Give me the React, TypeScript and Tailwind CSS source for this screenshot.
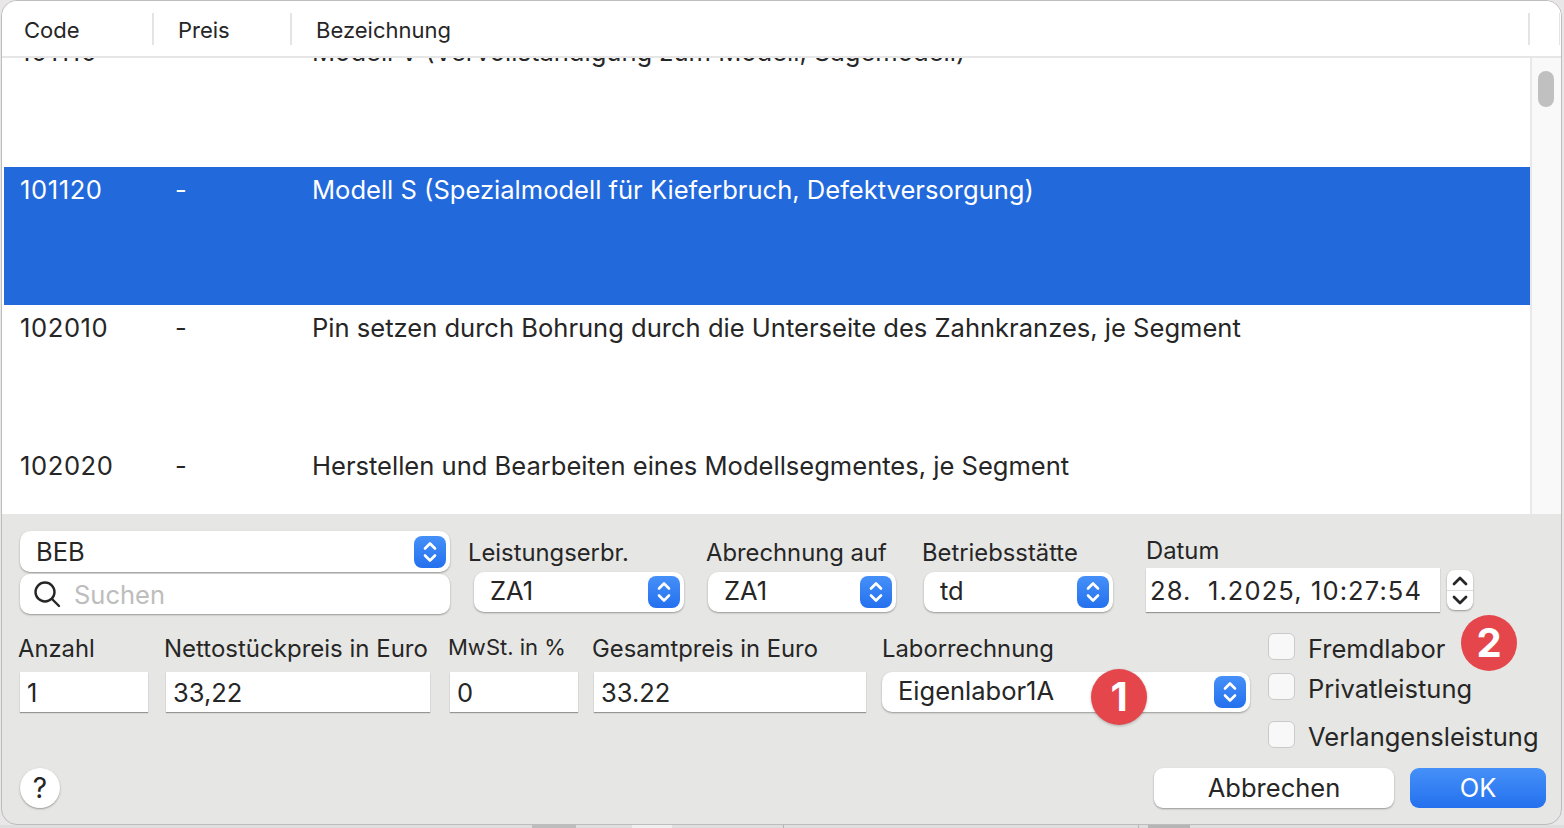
const rows = [
  { code: "101110", price: "-", name: "Modell V (Vervollständigung zum Modell, Sägemodell)" },
  { code: "101120", price: "-", name: "Modell S (Spezialmodell für Kieferbruch, Defektversorgung)", selected: true },
  { code: "102010", price: "-", name: "Pin setzen durch Bohrung durch die Unterseite des Zahnkranzes, je Segment" },
  { code: "102020", price: "-", name: "Herstellen und Bearbeiten eines Modellsegmentes, je Segment" },
];

const Arrows = () => (
  <span className="flex h-8 w-8 items-center justify-center rounded-lg bg-gradient-to-b from-[#4590f8] to-[#2470ee]">
    <svg width="16" height="24" viewBox="0 0 16 24" fill="none" stroke="white" strokeWidth="2.6" strokeLinecap="round" strokeLinejoin="round">
      <path d="M3 8.5 8 3.5l5 5" />
      <path d="M3 15.5l5 5 5-5" />
    </svg>
  </span>
);

const Select = ({ value, className, textClass = "-mt-[2px]" }: { value: string; className: string; textClass?: string }) => (
  <div className={`flex h-10 items-center justify-between rounded-[10px] bg-white pl-[16px] pr-1 text-[25.5px] leading-none text-[#262626] shadow-[0_1px_2px_rgba(0,0,0,0.35)] ${className}`}>
    <span className={textClass}>{value}</span>
    <Arrows />
  </div>
);

const Field = ({ value, className }: { value: string; className: string }) => (
  <div className={`flex h-10 items-center bg-white pl-[7px] pt-[2px] text-[25.5px] leading-none text-[#262626] shadow-[0_1px_1px_rgba(0,0,0,0.35)] ${className}`}>{value}</div>
);

const Check = ({ label, className }: { label: string; className: string }) => (
  <div className={`flex h-[27px] items-center gap-[13px] ${className}`}>
    <span className="h-[27px] w-[27px] rounded-[6px] border border-[#cacaca] bg-[#f8f8f8]" />
    <span className="pt-[5px] text-[25.5px] leading-none text-[#262626]">{label}</span>
  </div>
);

const Badge = ({ n, className }: { n: string; className: string }) => (
  <span className={`absolute flex h-14 w-14 items-center justify-center rounded-full bg-[#e5464b] text-[40px] font-bold leading-none text-white ${className}`}>{n}</span>
);

export default function App() {
  return (
    <div className="h-[828px] w-[1564px] overflow-hidden bg-[#e9e7e7] font-['Inter',sans-serif] text-[#262626]">
      <div className="relative ml-[1px] flex h-[825px] w-[1561px] flex-col overflow-hidden rounded-[16px] border border-[#bdbdbd] bg-[#e6e6e4]">
        {/* table header */}
        <div className="flex h-[57px] shrink-0 items-center border-b-2 border-[#e6e6e6] bg-white pl-[22px] text-[22px] text-[#262626]">
          <span className="w-[128px] pt-[4px]">Code</span>
          <span className="mr-[24px] h-8 w-[2px] bg-[#e4e4e4]" />
          <span className="w-[112px] pt-[4px]">Preis</span>
          <span className="mr-[24px] h-8 w-[2px] bg-[#e4e4e4]" />
          <span className="grow pt-[4px]">Bezeichnung</span>
          <span className="mr-[29px] h-8 w-[2px] bg-[#e4e4e4]" />
          <span className="mr-[1px] h-8 w-[1px] bg-[#e4e4e4]" />
        </div>

        {/* table body */}
        <div className="flex h-[456px] shrink-0 bg-white pl-[2px]">
          <div className="min-w-0 grow overflow-hidden">
            <div className="-mt-[29px]">
              {rows.map((r) => (
                <div key={r.code} className={`flex h-[138px] items-start pl-[16px] pt-[8px] text-[25.55px] leading-[29px] ${r.selected ? "bg-[#2269dc] text-white" : "text-[#262626]"}`}>
                  <span className="w-[155px] tracking-[0.6px]">{r.code}</span>
                  <span className="w-[137px]">{r.price}</span>
                  <span>{r.name}</span>
                </div>
              ))}
            </div>
          </div>
          <div className="w-[31px] shrink-0 border-l-2 border-[#e8e8e8] bg-[#f9f9f9] pl-[6px] pt-[13px]">
            <div className="h-9 w-4 rounded-full bg-[#c0c0c0]" />
          </div>
        </div>

        {/* form */}
        <div className="grow pl-[18px] pt-[17px]">
          <div className="flex h-[85px] items-start">
            <div className="flex w-[430px] flex-col gap-[2px]">
              <Select value="BEB" className="w-full !h-[41px]" textClass="" />
              <div className="flex h-10 items-center rounded-[10px] bg-white pl-[13px] text-[25.5px] leading-none text-[#bdbdbd] shadow-[0_1px_2px_rgba(0,0,0,0.35)]">
                <svg width="28" height="28" viewBox="0 0 28 28" fill="none" stroke="#262626" strokeWidth="2.4" strokeLinecap="round">
                  <circle cx="12" cy="12" r="9.5" />
                  <path d="M19 19l7 7" />
                </svg>
                <span className="ml-[13px] pt-[2px]">Suchen</span>
              </div>
            </div>
            <div className="ml-[18px] w-[216px]">
              <div className="h-[41px] pt-[10px] text-[23.8px] leading-none">Leistungserbr.</div>
              <Select value="ZA1" className="ml-[6px] w-[210px]" />
            </div>
            <div className="ml-[22px] w-[190px]">
              <div className="h-[41px] pt-[10px] text-[23.8px] leading-none">Abrechnung auf</div>
              <Select value="ZA1" className="ml-[2px] w-[188px]" />
            </div>
            <div className="ml-[26px] w-[192px]">
              <div className="h-[41px] pt-[10px] text-[23.8px] leading-none">Betriebsstätte</div>
              <Select value="td" className="ml-[2px] w-[189px]" />
            </div>
            <div className="ml-[32px]">
              <div className="h-[37px] pt-[8px] text-[23.8px] leading-none">Datum</div>
              <div className="flex items-center">
                <Field value="28.  1.2025, 10:27:54" className="!h-[44px] w-[294px] whitespace-pre !pl-[4px] tracking-[1.1px]" />
                <div className="ml-[7px] flex h-10 w-[26px] flex-col items-center justify-center gap-[4px] rounded-[8px] bg-white shadow-[0_1px_2px_rgba(0,0,0,0.35)]">
                  <svg width="16" height="10" viewBox="0 0 16 10" fill="none" stroke="#262626" strokeWidth="2.8" strokeLinecap="round" strokeLinejoin="round"><path d="M2 8l6-6 6 6" /></svg>
                  <span className="h-[1px] w-full bg-[#dddddd]" />
                  <svg width="16" height="10" viewBox="0 0 16 10" fill="none" stroke="#262626" strokeWidth="2.8" strokeLinecap="round" strokeLinejoin="round"><path d="M2 2l6 6 6-6" /></svg>
                </div>
              </div>
            </div>
          </div>

          <div className="flex h-[152px] items-start pt-[17px]">
            <div className="w-[146px]">
              <div className="-ml-[2px] h-[39px] text-[23.8px] leading-[32px]">Anzahl</div>
              <Field value="1" className="w-[128px]" />
            </div>
            <div className="w-[284px]">
              <div className="-ml-[2px] h-[39px] whitespace-nowrap text-[24px] leading-[32px]">Nettostückpreis in Euro</div>
              <Field value="33,22" className="w-[264px]" />
            </div>
            <div className="w-[144px]">
              <div className="-ml-[2px] h-[39px] text-[22px] leading-[28px]">MwSt. in %</div>
              <Field value="0" className="w-[128px]" />
            </div>
            <div className="w-[288px]">
              <div className="-ml-[2px] h-[39px] whitespace-nowrap text-[23.8px] leading-[32px]">Gesamtpreis in Euro</div>
              <Field value="33.22" className="w-[272px]" />
            </div>
            <div className="w-[386px]">
              <div className="h-[39px] text-[23.8px] leading-[32px]">Laborrechnung</div>
              <Select value="Eigenlabor1A" className="w-[368px]" />
            </div>
            <div className="flex flex-col">
              <Check label="Fremdlabor" className="" />
              <Check label="Privatleistung" className="mt-[13px]" />
              <Check label="Verlangensleistung" className="mt-[21px]" />
            </div>
          </div>

          <div className="flex items-center pr-[15px]">
            <div className="flex h-10 w-10 items-center justify-center rounded-full bg-white pb-[1px] text-[28px] leading-none text-[#262626] shadow-[0_1px_2px_rgba(0,0,0,0.35)]">?</div>
            <div className="ml-auto flex h-10 w-[240px] items-center justify-center rounded-[9px] bg-white text-[25.5px] leading-none text-[#262626] shadow-[0_1px_2px_rgba(0,0,0,0.35)]">Abbrechen</div>
            <div className="ml-[16px] flex h-10 w-[136px] items-center justify-center rounded-[9px] bg-gradient-to-b from-[#4590f8] to-[#2470ee] text-[25.5px] leading-none text-white">OK</div>
          </div>
        </div>

        <Badge n="1" className="left-[1089px] top-[668px] shadow-[0_1px_3px_rgba(0,0,0,0.25)]" />
        <Badge n="2" className="left-[1459px] top-[614px]" />
      </div>

      {/* bits of the window behind the dialog */}
      <div className="flex h-[3px]">
        <span className="w-[532px] bg-[#dedede]" />
        <span className="w-[44px] bg-[#bdbdbd]" />
        <span className="w-[56px] bg-[#dedede]" />
        <span className="w-[40px] bg-[#efefef]" />
        <span className="w-[111px] bg-[#dedede]" />
        <span className="w-[1px] bg-[#b5b5b5]" />
        <span className="w-[354px] bg-[#dedede]" />
        <span className="w-[1px] bg-[#b5b5b5]" />
        <span className="w-[9px] bg-[#dedede]" />
        <span className="w-[42px] bg-[#b5b5b5]" />
        <span className="grow bg-[#dedede]" />
      </div>
    </div>
  );
}
